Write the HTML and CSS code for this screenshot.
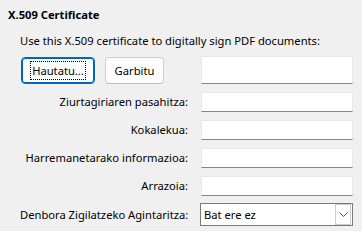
FILE: index.html
```html
<!DOCTYPE html>
<html lang="eu">
<head>
    <meta charset="UTF-8">
    <title>X.509 Certificate</title>
    <link rel="stylesheet" href="styles.css">
</head>
<body>
    <div class="panel">
        <h1 class="title">X.509 Certificate</h1>
        <p class="intro">Use this X.509 certificate to digitally sign PDF documents:</p>

        <div class="form">
            <div class="buttons">
                <button class="btn btn-default"><span class="focus">Hautatu...</span></button>
                <button class="btn">Garbitu</button>
            </div>
            <input type="text" class="field field-tall">

            <label class="label">Ziurtagiriaren pasahitza:</label>
            <input type="password" class="field">

            <label class="label">Kokalekua:</label>
            <input type="text" class="field">

            <label class="label">Harremanetarako informazioa:</label>
            <input type="text" class="field">

            <label class="label">Arrazoia:</label>
            <input type="text" class="field">

            <label class="label">Denbora Zigilatzeko Agintaritza:</label>
            <div class="combo">
                <span class="combo-text">Bat ere ez</span>
                <span class="combo-arrow">
                    <svg width="9" height="5" viewBox="0 0 9 5"><path d="M0.5 0.5 L4.5 4.5 L8.5 0.5" fill="none" stroke="#555" stroke-width="1"/></svg>
                </span>
            </div>
        </div>
    </div>
</body>
</html>
```

FILE: styles.css
```css
* {
    margin: 0;
    padding: 0;
    box-sizing: border-box;
}

body {
    font-family: "Noto Sans", "Open Sans", Arial, sans-serif;
    font-size: 11.2px;
    color: #000;
    background-color: #f0f0f0;
    overflow: hidden;
}

.panel {
    padding: 7px 8px;
}

.title {
    font-size: 11.2px;
    font-weight: bold;
    line-height: 16px;
}

.intro {
    margin-top: 10px;
    margin-left: 12px;
    line-height: 16px;
}

.form {
    display: grid;
    grid-template-columns: 168px 152px;
    column-gap: 13px;
    row-gap: 8px;
    margin-top: 7px;
    margin-left: 12px;
    align-items: center;
}

.buttons {
    display: flex;
    gap: 10px;
    padding-left: 1px;
}

.btn {
    height: 27px;
    font-family: inherit;
    font-size: 11.2px;
    background-color: #fdfdfd;
    border: 1px solid #d0d0d0;
    border-bottom-color: #bcbcbc;
    border-radius: 4px;
    padding: 0;
    width: 59px;
}

.btn-default {
    width: 74px;
    border: 1px solid #0067c0;
    box-shadow: inset 0 0 0 1px #0067c0;
}

.focus {
    border: 1px dotted #000;
    padding: 1px 1px;
}

.label {
    text-align: right;
    line-height: 20px;
    white-space: nowrap;
}

.field {
    height: 20px;
    width: 152px;
    background-color: #fff;
    border: 1px solid #e8e8e8;
    border-bottom: 1px solid #868686;
    font-family: inherit;
    font-size: 11.2px;
}

.field-tall {
    height: 28px;
}

.combo {
    display: flex;
    align-items: center;
    height: 23px;
    width: 153px;
    margin-left: -1px;
    margin-top: -1px;
    background-color: #fff;
    border: 1px solid #7a7a7a;
}

.combo-text {
    flex: 1;
    padding-left: 3px;
}

.combo-arrow {
    display: flex;
    align-items: center;
    justify-content: center;
    width: 16px;
    height: 21px;
    margin-right: 1px;
    border: 1px solid #cccccc;
    background-color: #fff;
}
```
